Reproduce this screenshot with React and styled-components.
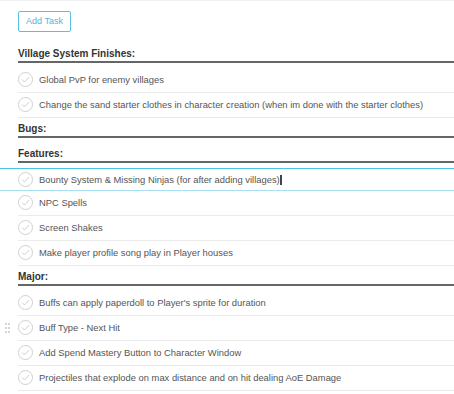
import React from 'react'
import styled, { createGlobalStyle } from 'styled-components'

const GlobalStyle = createGlobalStyle`
  html, body {
    margin: 0;
    padding: 0;
    background: #fff;
  }
  body {
    font-family: 'Liberation Sans', Arial, sans-serif;
  }
`

const Page = styled.div`
  width: 454px;
  min-height: 394px;
  border-top: 1px solid #f0f0f0;
  padding-top: 9px;
  box-sizing: border-box;
`

const Toolbar = styled.div`
  padding-left: 18px;
  margin-bottom: 11px;
`

const AddButton = styled.button`
  height: 21px;
  width: 53px;
  padding: 0;
  background: #fff;
  border: 1px solid #5bc0de;
  border-radius: 2px;
  color: #4fb6dc;
  font-family: 'Liberation Sans', Arial, sans-serif;
  font-size: 9px;
  cursor: pointer;
`

const Section = styled.section`
  display: flex;
  flex-direction: column;
`

const Heading = styled.h3`
  margin: 0 0 0 18px;
  height: 20px;
  box-sizing: border-box;
  padding-top: 4px;
  line-height: 14px;
  font-size: 10px;
  font-weight: bold;
  color: #333;
  border-bottom: 2px solid #666;
`

const List = styled.ul`
  list-style: none;
  margin: 0;
  padding: 5px 0 0;
`

const Row = styled.li`
  position: relative;
  padding-left: 18px;
  border-top: ${p => (p.$active ? '1px solid #4fc0e8' : 'none')};
  border-bottom: ${p => (p.$active ? '1px solid #a9dff2' : 'none')};
`

const RowInner = styled.div`
  display: flex;
  align-items: center;
  gap: 6px;
  height: ${p => (p.$active ? '21px' : '24px')};
  border-bottom: ${p => (p.$active ? 'none' : '1px solid #ebebeb')};
`

const Label = styled.span`
  font-size: 9.4px;
  color: #555;
  white-space: nowrap;
`

const Caret = styled.span`
  display: inline-block;
  width: 2px;
  height: 10px;
  background: #444;
  vertical-align: -2px;
`

const Handle = styled.span`
  position: absolute;
  left: 5px;
  top: 50%;
  transform: translateY(-50%);
  display: grid;
  grid-template-columns: 2px 2px;
  gap: 2px 1px;
  & > i {
    width: 2px;
    height: 2px;
    background: #d4d4d4;
  }
`

const CheckIcon = () => (
  <svg width="15" height="15" viewBox="0 0 15 15" fill="none">
    <circle cx="7.5" cy="7.5" r="7" stroke="#d0d0d0" strokeWidth="1" />
    <path d="M4.3 7.8 L6.5 10 L10.8 5.3" stroke="#d0d0d0" strokeWidth="1" strokeLinecap="round" strokeLinejoin="round" />
  </svg>
)

const sections = [
  {
    title: 'Village System Finishes:',
    tasks: [
      { text: 'Global PvP for enemy villages' },
      { text: 'Change the sand starter clothes in character creation (when im done with the starter clothes)' },
    ],
  },
  { title: 'Bugs:', tasks: [] },
  {
    title: 'Features:',
    tasks: [
      { text: 'Bounty System & Missing Ninjas (for after adding villages)', active: true },
      { text: 'NPC Spells' },
      { text: 'Screen Shakes' },
      { text: 'Make player profile song play in Player houses' },
    ],
  },
  {
    title: 'Major:',
    tasks: [
      { text: "Buffs can apply paperdoll to Player's sprite for duration" },
      { text: 'Buff Type - Next Hit', hover: true },
      { text: 'Add Spend Mastery Button to Character Window' },
      { text: 'Projectiles that explode on max distance and on hit dealing AoE Damage' },
    ],
  },
]

export default function App() {
  return (
    <Page>
      <GlobalStyle />
      <Toolbar>
        <AddButton>Add Task</AddButton>
      </Toolbar>
      {sections.map(section => (
        <Section key={section.title}>
          <Heading>{section.title}</Heading>
          <List>
            {section.tasks.map(task => (
              <Row key={task.text} $active={task.active}>
                {task.hover && (
                  <Handle>
                    <i /><i /><i /><i /><i /><i />
                  </Handle>
                )}
                <RowInner $active={task.active}>
                  <CheckIcon />
                  <Label>
                    {task.text}
                    {task.active && <Caret />}
                  </Label>
                </RowInner>
              </Row>
            ))}
          </List>
        </Section>
      ))}
    </Page>
  )
}
